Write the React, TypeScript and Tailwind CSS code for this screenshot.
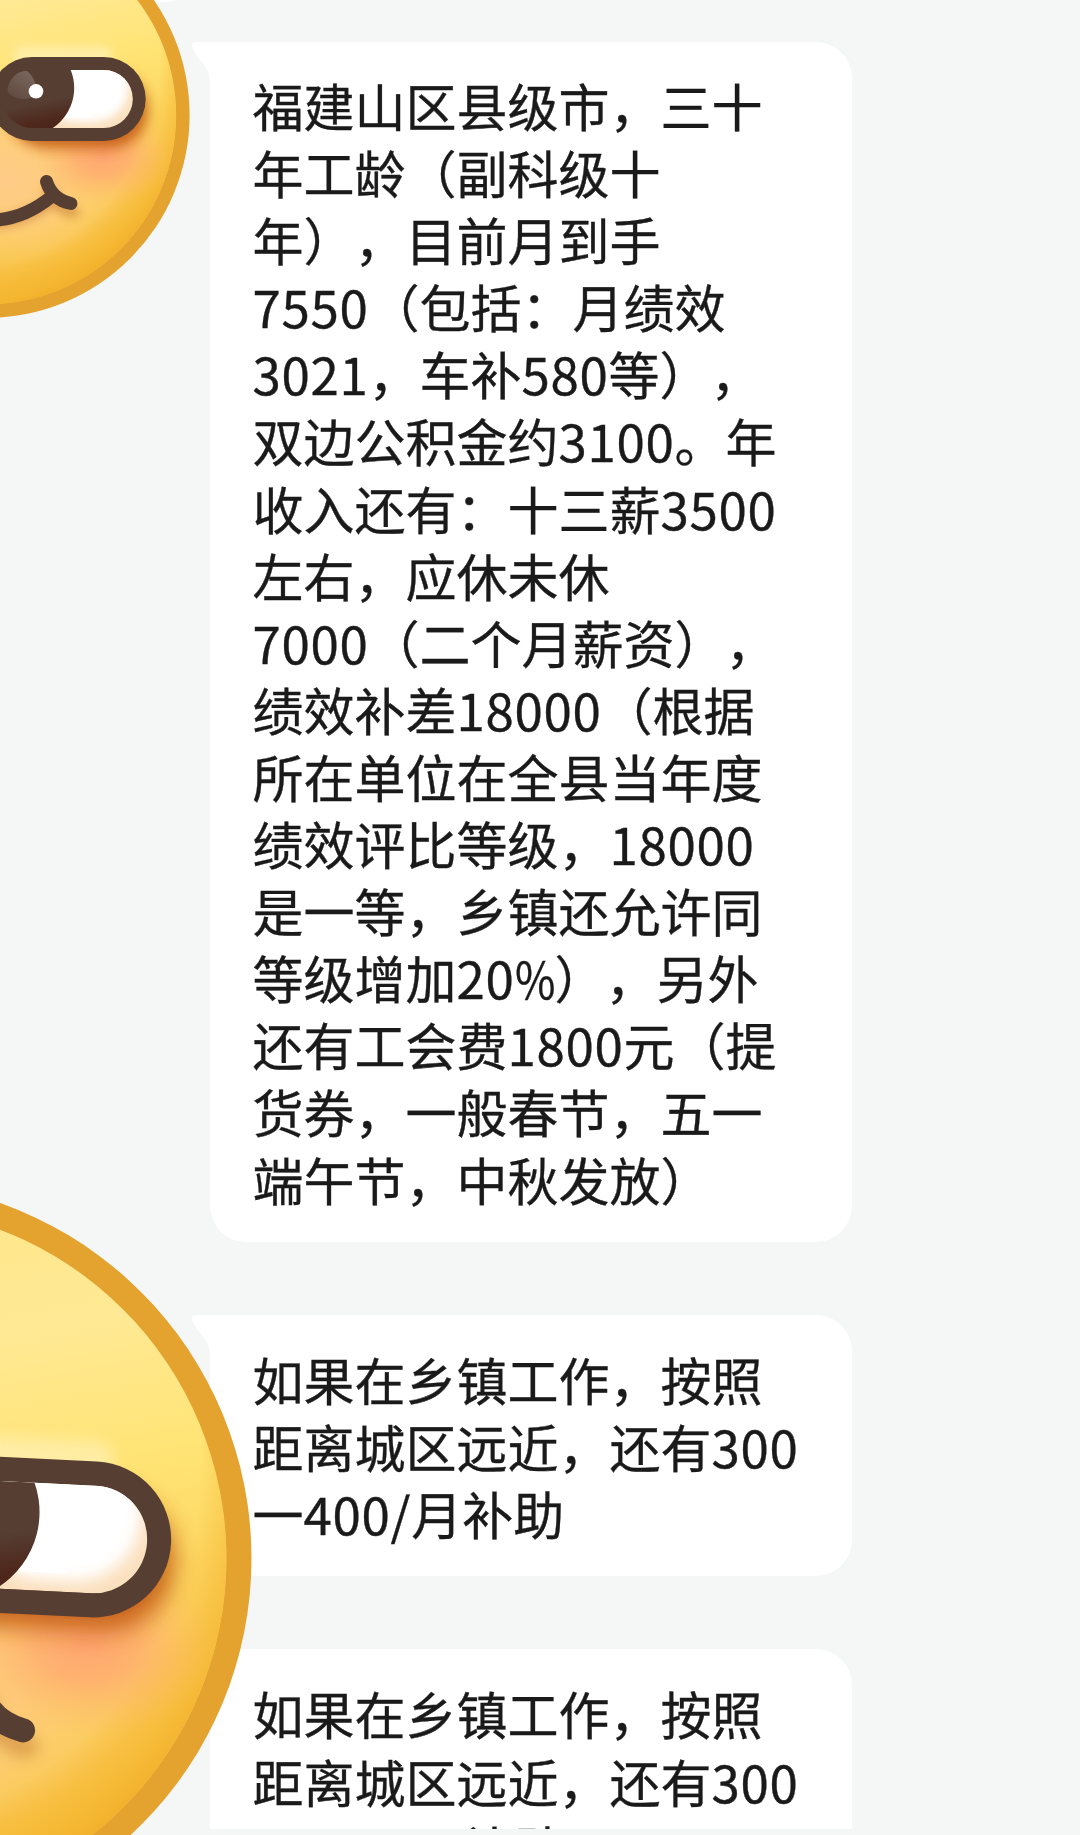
const salaryLines = [
  '福建山区县级市，三十',
  '年工龄（副科级十',
  '年），目前月到手',
  '7550（包括：月绩效',
  '3021，车补580等），',
  '双边公积金约3100。年',
  '收入还有：十三薪3500',
  '左右，应休未休',
  '7000（二个月薪资），',
  '绩效补差18000（根据',
  '所在单位在全县当年度',
  '绩效评比等级，18000',
  '是一等，乡镇还允许同',
  '等级增加20%），另外',
  '还有工会费1800元（提',
  '货券，一般春节，五一',
  '端午节，中秋发放）',
]

const townLines = ['如果在乡镇工作，按照', '距离城区远近，还有300', '一400/月补助']

// digits are set a little wider than the font's own, the percent sign narrower
function Line({ text }: { text: string }) {
  const parts = text.split(/([0-9/]+|%)/)
  return (
    <p className="whitespace-nowrap">
      {parts.map((part, i) =>
        i % 2 === 1 ? (
          <span
            key={i}
            className={part === '%' ? 'inline-block w-[40px] origin-left scale-x-[0.86]' : 'tracking-[0.7px]'}
          >
            {part}
          </span>
        ) : (
          part
        ),
      )}
    </p>
  )
}

function Bubble({ lines, className = '' }: { lines: string[]; className?: string }) {
  return (
    <div className={`relative w-[642px] rounded-[36px] rounded-tl-none bg-white pl-[42.5px] ${className}`}>
      <svg className="absolute -left-[19px] top-0" width="20" height="42" viewBox="0 0 20 42">
        <path d="M20 0H4Q0 0 1 5C3 12 10 18 15 26Q19 32 19 42H20Z" fill="#fff" />
      </svg>
      {lines.map((line) => (
        <Line key={line} text={line} />
      ))}
    </div>
  )
}

function Defs() {
  return (
    <defs>
      <linearGradient id="skin" x1="0.42" y1="0" x2="0.66" y2="1">
        <stop offset="0" stopColor="#ffe588" />
        <stop offset="0.22" stopColor="#ffe994" />
        <stop offset="0.42" stopColor="#ffe475" />
        <stop offset="0.58" stopColor="#fdd763" />
        <stop offset="0.75" stopColor="#fbcd60" />
        <stop offset="0.9" stopColor="#f9c44a" />
        <stop offset="1" stopColor="#f4b535" />
      </linearGradient>
      <radialGradient id="rim" gradientUnits="userSpaceOnUse" cx="-46" cy="64" r="248">
        <stop offset="0.83" stopColor="#f4b32b" stopOpacity="0" />
        <stop offset="0.95" stopColor="#f5b731" stopOpacity="0.8" />
        <stop offset="1" stopColor="#f3b22c" />
      </radialGradient>
      <radialGradient id="glow">
        <stop offset="0" stopColor="#ffcb88" />
        <stop offset="0.5" stopColor="#ffcd82" stopOpacity="0.8" />
        <stop offset="1" stopColor="#ffd277" stopOpacity="0" />
      </radialGradient>
      <radialGradient id="blush">
        <stop offset="0" stopColor="#ffa571" />
        <stop offset="0.4" stopColor="#ffa971" stopOpacity="0.75" />
        <stop offset="1" stopColor="#ffb865" stopOpacity="0" />
      </radialGradient>
      <linearGradient id="pupil" gradientUnits="userSpaceOnUse" x1="28" y1="104" x2="34" y2="132">
        <stop offset="0" stopColor="#563e33" />
        <stop offset="0.7" stopColor="#4f281c" />
        <stop offset="1" stopColor="#4c2419" />
      </linearGradient>
      <linearGradient id="shine" x1="0.8" y1="0" x2="0.2" y2="1">
        <stop offset="0" stopColor="#7a675e" />
        <stop offset="1" stopColor="#604a40" />
      </linearGradient>
      <clipPath id="faceClip">
        <circle cx="-13.4" cy="115" r="189.5" />
      </clipPath>
      <clipPath id="eyeClip">
        <rect x="3" y="70" width="129.8" height="58" rx="29" />
      </clipPath>
      <filter id="soft4" x="-50%" y="-50%" width="200%" height="200%">
        <feGaussianBlur stdDeviation="4" />
      </filter>
      <filter id="soft7" x="-50%" y="-50%" width="200%" height="200%">
        <feGaussianBlur stdDeviation="6.5" />
      </filter>
    </defs>
  )
}

function Face() {
  return (
    <g>
      <circle cx="-13.4" cy="115" r="203" fill="#e4a32f" />
      <circle cx="-13.4" cy="115" r="189.5" fill="url(#skin)" />
      <g clipPath="url(#faceClip)">
        <ellipse cx="5" cy="180" rx="125" ry="88" fill="url(#glow)" />
        <circle cx="-13.4" cy="115" r="189.5" fill="url(#rim)" />
        {/* brow light */}
        <rect x="14" y="46" width="98" height="22" rx="8" fill="#ffefb0" opacity="0.8" filter="url(#soft4)" />
        <ellipse cx="103" cy="155" rx="68" ry="50" fill="url(#blush)" />
        <rect x="8" y="72" width="140" height="76" rx="38" fill="#c45f18" opacity="0.95" filter="url(#soft7)" />
      </g>

      {/* eye */}
      <rect x="-10" y="57" width="155.7" height="84" rx="42" fill="#563e33" />
      <g clipPath="url(#eyeClip)">
        <rect x="50" y="70" width="83" height="58" fill="#fbe0be" />
        <rect x="40" y="42" width="89" height="80" rx="36" fill="#fff" filter="url(#soft4)" />
        <rect x="50" y="70" width="40" height="48" fill="#fff" />
        <circle cx="26.2" cy="88" r="48" fill="url(#pupil)" />
      </g>
      <path d="M7.5 91C8 79 18 70 27 71C34 76 38 87 35 96C27 101 12 100 7.5 91Z" fill="url(#shine)" />
      <circle cx="36" cy="91.3" r="7.3" fill="#fff" />

      {/* mouth */}
      <g fill="none" strokeLinecap="round" strokeLinejoin="round" strokeWidth="13">
        <g stroke="#c0792f" opacity="0.5" filter="url(#soft4)">
          <path d="M-60 209Q-3 240 52 201" />
          <path d="M49 190Q54 207 73 212" />
        </g>
        <g stroke="#563e33">
          <path d="M-70 199Q-5 242 51 197" />
          <path d="M46.5 181.5Q52 199.5 71 203.5" />
        </g>
      </g>
    </g>
  )
}

function Stickers() {
  return (
    <svg className="absolute left-0 top-0" width="260" height="1835" viewBox="0 0 260 1835">
      <Defs />
      <ellipse cx="165" cy="-1" rx="11" ry="3" fill="#fff" />
      <Face />
      <g transform="translate(-125.5 1558.5) rotate(2.8) scale(1.857) translate(13.4 -115)">
        <Face />
      </g>
    </svg>
  )
}

export default function App() {
  return (
    <div className="relative h-[1835px] w-[1080px] overflow-hidden bg-[#f4f7f6]">
      <main
        lang="zh-CN"
        className="flex flex-col pl-[210px] pt-[42px] font-['Noto_Sans_CJK_SC',sans-serif] text-[51px] leading-[67.1px] text-[#1a1a1a] [-webkit-text-stroke:0.35px_#1a1a1a] [text-spacing-trim:space-all]"
      >
        <Bubble lines={salaryLines} className="h-[1200px] pt-[30px]" />
        <Bubble lines={townLines} className="mt-[73px] h-[261px] pt-[31px]" />
        {/* cut off by the bottom of the view */}
        <div className="mt-[73px] h-[180px] overflow-hidden leading-[67.6px]">
          <Bubble lines={townLines} className="h-[261px] pt-[31px]" />
        </div>
      </main>
      <Stickers />
    </div>
  )
}
